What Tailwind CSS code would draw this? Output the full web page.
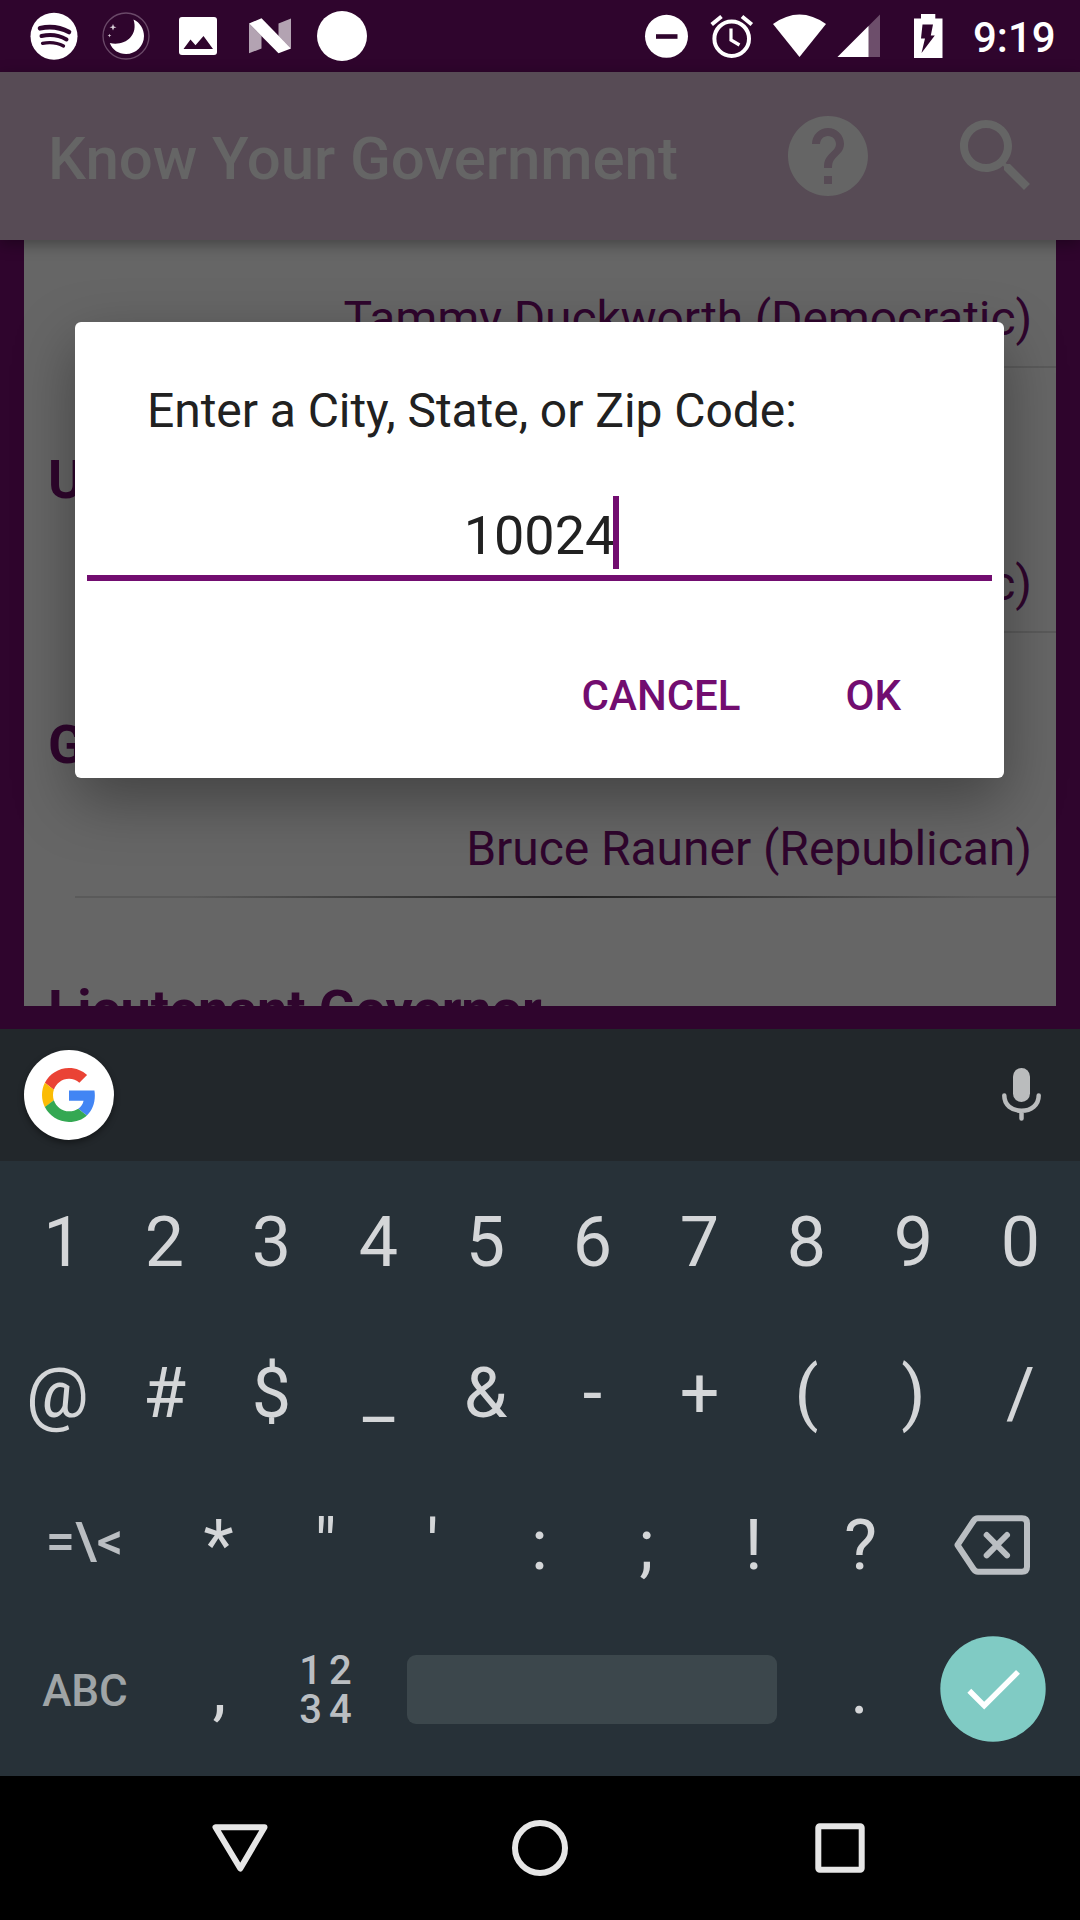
<!DOCTYPE html>
<html lang="en">
<head>
<meta charset="utf-8">
<title>Know Your Government</title>
<script src="https://cdn.jsdelivr.net/npm/@tailwindcss/browser@4"></script>
</head>
<body class="bg-black">
<div class="relative flex h-[1920px] w-[1080px] flex-col overflow-hidden bg-[#2f052d] font-['Roboto',sans-serif]">

  <!-- status bar -->
  <header class="flex h-[72px] shrink-0 items-center bg-[#2f052d] pl-[30px]">
    <div class="flex gap-6">
      <svg class="h-[72px] w-12" viewBox="30 0 48 72" fill="none"><circle cx="54" cy="36.2" r="23.5" fill="#fff"/><g stroke="#2f052d" stroke-linecap="round"><path d="M40 28.3q15.500-3.500 29 3.700" stroke-width="4.600"/><path d="M41.500 36q14-3 25 3.500" stroke-width="4"/><path d="M42.500 43.300q12-2.300 21 2.700" stroke-width="3.300"/></g></svg>
      <svg class="h-[72px] w-12" viewBox="102 0 48 72"><circle cx="126" cy="36" r="23" fill="none" stroke="#6a4968" stroke-width="1.3"/><path d="M133.500 19.500C140 22.500 144 29 144 36C144 46 136 54 126 54C118.500 54 112.500 50 109.800 43C123 46.500 139 37 133.500 19.500Z" fill="#fff"/><path d="M113 24l1 2.500 2.500.8-2.500.8-1 2.500-1-2.500-2.500-.8 2.500-.8ZM109.500 33.700l.5 1.400 1.400.5-1.400.5-.5 1.400-.5-1.400-1.400-.5 1.400-.5Z" fill="#d9cfd9"/></svg>
      <svg class="h-[72px] w-12" viewBox="174 0 48 72"><rect x="179" y="17" width="38" height="38" rx="3" fill="#fff"/><path d="M183.500 49L190.500 39.500 195.500 45.300 203.500 36 213 49Z" fill="#2f052d"/></svg>
      <svg class="h-[72px] w-12" viewBox="246 0 48 72"><path d="M249 23.500L261.500 36V48.500L249 53.300ZM278.500 23.500L291 18.500V48.500L278.500 36Z" fill="#b3a3b2"/><path d="M249 23.500L261.500 18.300 291 48.500 278.500 53.300Z" fill="#fff"/></svg>
      <svg class="-ml-px h-[72px] w-[50px]" viewBox="317 0 50 72"><circle cx="342" cy="36" r="25" fill="#fff"/></svg>
    </div>
    <div class="ml-[275px] flex items-center">
      <svg class="h-[72px] w-12" viewBox="642 0 48 72"><circle cx="666.500" cy="36.300" r="21.500" fill="#fff"/><path d="M656 36.500h21.500" stroke="#2f052d" stroke-width="4.600"/></svg>
      <svg class="ml-[18px] h-[72px] w-12" viewBox="708 0 48 72" fill="none" stroke="#fff"><circle cx="731.700" cy="38.700" r="17.300" stroke-width="4"/><path d="M731 28.500V40L739.500 45" stroke-width="3.200"/><path d="M711.700 24.500L721.500 16.500M742 16.500L751.800 24.500" stroke-width="4"/></svg>
      <svg class="ml-[17px] h-[72px] w-[54px]" viewBox="773 0 54 72"><path d="M773 24Q799.500 5 826 24L799.500 57Z" fill="#fff"/></svg>
      <svg class="ml-[10px] h-[72px] w-[44px]" viewBox="837 0 44 72"><path d="M837.500 57L880 14.500V57Z" fill="#6d4e6b"/><path d="M837.500 57L868.500 26V57Z" fill="#fff"/></svg>
      <svg class="ml-[33px] h-[72px] w-[30px]" viewBox="914 0 30 72"><path d="M914 18.500h7V14h14.300v4.500h7.200V58H914Z" fill="#fff"/><path d="M922.500 24.500h10.500l-2.200 11h4L921.500 53l3.500-14.500h-4Z" fill="#2f052d"/></svg>
      <span class="ml-[29px] pt-[3px] text-[42px] leading-[48px] font-medium text-white">9:19</span>
    </div>
  </header>

  <!-- toolbar -->
  <div class="relative z-10 flex h-[168px] shrink-0 items-center bg-[#574b55] pr-9 pl-12 text-[#656565] shadow-[0_4px_14px_rgba(0,0,0,0.35)]">
    <h1 class="pt-[5px] text-[60px] leading-[70px] font-medium tracking-[-0.06px]">Know Your Government</h1>
    <svg class="ml-auto h-24 w-24" viewBox="0 0 24 24" fill="currentColor"><path d="M12 2C6.480 2 2 6.480 2 12s4.480 10 10 10 10-4.480 10-10S17.520 2 12 2zm1 17h-2v-2h2v2zm2.070-7.750l-.9.920C13.450 12.900 13 13.500 13 15h-2v-.5c0-1.100.45-2.100 1.170-2.830l1.240-1.260c.370-.360.590-.860.590-1.410 0-1.100-.9-2-2-2s-2 .9-2 2H8c0-2.210 1.790-4 4-4s4 1.790 4 4c0 .880-.360 1.680-.930 2.250z"/></svg>
    <svg class="ml-[72px] h-24 w-24" viewBox="0 0 24 24" fill="currentColor"><path d="M15.500 14h-.79l-.28-.27C15.410 12.590 16 11.110 16 9.500 16 5.910 13.090 3 9.500 3S3 5.910 3 9.500 5.910 16 9.500 16c1.610 0 3.090-.59 4.230-1.570l.27.28v.79l5 4.990L20.490 19l-4.990-5zm-6 0C7.010 14 5 11.990 5 9.500S7.010 5 9.500 5 14 7.010 14 9.500 11.990 14 9.500 14z"/></svg>
  </div>

  <!-- officials -->
  <main class="mx-6 h-[766px] shrink-0 overflow-hidden bg-[#666] text-[#2f052d]">
    <ul class="-mt-[137px]">
      <li class="flex h-[265px] flex-col pt-20">
        <h2 class="pl-6 text-[54px] leading-[63px] font-bold">U.S. Senator</h2>
        <p class="mt-[45px] pr-6 text-right text-[48px] leading-[56px] tracking-[-0.12px]">Tammy Duckworth (Democratic)</p>
        <div class="mt-[19px] ml-[51px] h-[2px] bg-linear-to-r from-[#5a5a5a] from-12% via-[#222] via-50% to-[#5a5a5a] to-92%"></div>
      </li>
      <li class="flex h-[265px] flex-col pt-20">
        <h2 class="pl-6 text-[54px] leading-[63px] font-bold">U.S. Representative</h2>
        <p class="mt-[45px] pr-6 text-right text-[48px] leading-[56px]">(Democratic)</p>
        <div class="mt-[19px] ml-[51px] h-[2px] bg-linear-to-r from-[#5a5a5a] from-12% via-[#222] via-50% to-[#5a5a5a] to-92%"></div>
      </li>
      <li class="flex h-[265px] flex-col pt-20">
        <h2 class="pl-6 text-[54px] leading-[63px] font-bold">Governor</h2>
        <p class="mt-[45px] pr-6 text-right text-[48px] leading-[56px] tracking-[-0.05px]">Bruce Rauner (Republican)</p>
        <div class="mt-[19px] ml-[51px] h-[2px] bg-linear-to-r from-[#5a5a5a] from-12% via-[#222] via-50% to-[#5a5a5a] to-92%"></div>
      </li>
      <li class="flex h-[265px] flex-col pt-20">
        <h2 class="pl-6 text-[54px] leading-[63px] font-bold tracking-[-0.06px]">Lieutenant Governor</h2>
      </li>
    </ul>
  </main>

  <!-- dialog -->
  <section class="absolute top-[322px] left-[75px] z-20 flex h-[456px] w-[929px] flex-col rounded-[6px] bg-white pt-[61px] text-[#212121] shadow-[0_22px_60px_rgba(0,0,0,0.35)]">
    <h2 class="pl-[72px] text-[48px] leading-[56px] tracking-[-0.06px]">Enter a City, State, or Zip Code:</h2>
    <div class="mx-3 mt-[57px] flex h-[85px] justify-center border-b-[6px] border-[#720d70]">
      <span class="text-[54px] leading-[79px]">10024</span>
      <span class="-mr-[4px] -ml-[2px] h-[73px] w-[6px] bg-[#720d70]"></span>
    </div>
    <div class="mt-[87px] flex justify-end gap-[105px] pr-[103px] text-[42px] leading-[56px] font-medium text-[#720d70]">
      <button>CANCEL</button>
      <button>OK</button>
    </div>
  </section>

  <!-- keyboard -->
  <section class="relative z-30 mt-[23px] h-[747px] shrink-0 bg-[#273138]">
    <div class="flex h-[132px] items-center justify-between bg-[#22272b] pr-6 pl-6">
      <div class="flex size-[90px] items-center justify-center rounded-full bg-white shadow-[0_3px_6px_rgba(0,0,0,0.4)]">
        <svg class="size-[54px]" viewBox="0 0 48 48"><path fill="#ea4335" d="M24 9.500c3.540 0 6.710 1.220 9.210 3.600l6.850-6.850C35.900 2.380 30.470 0 24 0 14.620 0 6.510 5.380 2.560 13.220l7.980 6.190C12.430 13.720 17.740 9.500 24 9.500z"/><path fill="#4285f4" d="M46.980 24.550c0-1.570-.15-3.090-.38-4.550H24v9.020h12.940c-.58 2.960-2.260 5.480-4.780 7.180l7.730 6c4.510-4.180 7.090-10.360 7.090-17.650z"/><path fill="#fbbc05" d="M10.530 28.590c-.48-1.450-.76-2.990-.76-4.590s.27-3.140.76-4.590l-7.980-6.190C.92 16.460 0 20.120 0 24c0 3.880.92 7.540 2.560 10.780l7.970-6.190z"/><path fill="#34a853" d="M24 48c6.480 0 11.930-2.130 15.890-5.810l-7.730-6c-2.150 1.450-4.920 2.300-8.160 2.300-6.260 0-11.570-4.220-13.470-9.910l-7.980 6.190C6.510 42.620 14.620 48 24 48z"/></svg>
      </div>
      <svg class="h-[60px] w-[70px]" viewBox="986 1065 70 60"><rect x="1013" y="1068" width="17" height="34" rx="8.500" fill="#babcbd"/><path d="M1004.300 1095.500c0 9.500 7.500 15.200 17.200 15.200s17.200-5.700 17.200-15.200M1021.500 1111v7.500" fill="none" stroke="#babcbd" stroke-width="4.500" stroke-linecap="round"/></svg>
    </div>
    <div class="flex flex-col pr-[6px] pl-[4px] pt-[6px] text-[70px] leading-[84px] text-[#d4d6d8]">
      <div class="grid h-[150px] grid-cols-10 items-center text-center">
        <span class="pl-[11px]">1</span><span>2</span><span>3</span><span>4</span><span>5</span><span>6</span><span>7</span><span>8</span><span>9</span><span>0</span>
      </div>
      <div class="grid h-[152px] grid-cols-10 items-center text-center">
        <span>@</span><span>#</span><span>$</span><span>_</span><span>&amp;</span><span>-</span><span>+</span><span>(</span><span>)</span><span>/</span>
      </div>
      <div class="flex h-[152px] items-center text-center">
        <span class="w-[161px] pr-[0px] pb-[7px] text-[52px] leading-[56px] font-medium text-[#babec2]">=\&lt;</span>
        <span class="w-[107px]">*</span><span class="w-[107px]">"</span><span class="w-[107px]">'</span><span class="w-[107px]">:</span><span class="w-[107px]">;</span><span class="w-[107px]">!</span><span class="w-[107px]">?</span>
        <svg class="ml-[36px] h-[66px] w-[80px]" viewBox="950 1512 80 66" fill="none" stroke="#babec2" stroke-width="6" stroke-linejoin="round" stroke-linecap="round"><path d="M957.500 1545L973.500 1521Q975.300 1518.300 978 1518.300H1022Q1027 1518.300 1027 1523.300V1566.700Q1027 1571.700 1022 1571.700H978Q975.300 1571.700 973.500 1569Z"/><path d="M986.700 1535L1007 1555.300M1007 1535L986.700 1555.300"/></svg>
      </div>
      <div class="flex h-[136px] items-center text-center">
        <span class="w-[162px] pt-[4px] text-[44px] leading-[56px] font-medium text-[#9fa4a6]">ABC</span>
        <span class="w-[107px]">,</span>
        <span class="flex w-[106px] flex-col items-center pt-[2px] text-[40px] leading-[39px] font-medium text-[#babec2]"><span class="pl-[6px] tracking-[7px]">12</span><span class="pl-[6px] tracking-[7px]">34</span></span>
        <span class="ml-[28px] h-[69px] w-[370px] rounded-[9px] bg-[#3c474c]"></span>
        <span class="ml-[29px] w-[107px]">.</span>
        <svg class="ml-[27px] size-[106px] shrink-0" viewBox="940 1636 106 106" fill="none"><circle cx="993" cy="1689" r="52.700" fill="#80cbc4"/><path d="M969.300 1690.800L984.200 1705.700 1018 1671.900" stroke="#fff" stroke-width="5.500"/></svg>
      </div>
    </div>
  </section>

  <!-- navigation bar -->
  <nav class="flex h-[144px] shrink-0 items-center justify-center gap-[240px] bg-black">
    <svg class="size-[60px]" viewBox="210 1818 60 60" fill="none" stroke="#e6e6e6" stroke-width="6" stroke-linejoin="round"><path d="M215.500 1827.200H264.500L240.300 1868.500Z"/></svg>
    <svg class="size-[60px]" viewBox="510 1818 60 60" fill="none" stroke="#e6e6e6" stroke-width="6"><circle cx="540" cy="1848" r="25"/></svg>
    <svg class="size-[60px]" viewBox="810 1818 60 60" fill="none" stroke="#e6e6e6" stroke-width="6"><rect x="818.300" y="1826.300" width="43.400" height="43.400" rx="1.500"/></svg>
  </nav>
</div>
</body>
</html>
